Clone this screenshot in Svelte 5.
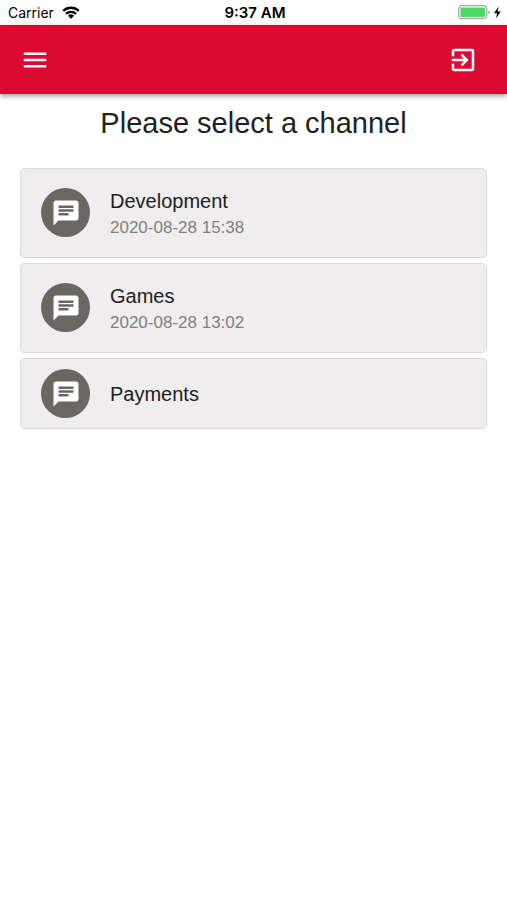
<script lang="ts">
  type Channel = { name: string; lastMessage?: string };

  const channels: Channel[] = [
    { name: "Development", lastMessage: "2020-08-28 15:38" },
    { name: "Games", lastMessage: "2020-08-28 13:02" },
    { name: "Payments" },
  ];
</script>

<div class="status-bar">
  <div class="carrier">
    <span>Carrier</span>
    <svg width="18" height="13" viewBox="0 0 18 13" aria-hidden="true">
      <g fill="none" stroke="#000" stroke-width="2.3">
        <path d="M1.2 4.9a11.2 11.2 0 0 1 15.6 0" />
        <path d="M4 7.8a7.2 7.2 0 0 1 10 0" />
      </g>
      <path d="M6 9.7a4.3 4.3 0 0 1 6 0l-3 3z" />
    </svg>
  </div>
  <div class="time">9:37 AM</div>
  <div class="battery">
    <svg width="44" height="15" viewBox="0 0 44 15" aria-hidden="true">
      <rect x="0.7" y="0.7" width="28" height="13" rx="3.4" fill="#fff" stroke="#a9a9a9" stroke-width="1.3" />
      <rect x="2.5" y="2.5" width="24.4" height="9.4" rx="1.2" fill="#4cd964" />
      <path d="M30.2 5.2q1.6.8 1.6 2t-1.6 2z" fill="#a9a9a9" />
      <path d="M40.7 1.5 36 8.3h3.1l-1.2 5.2 4.9-7h-3.2z" />
    </svg>
  </div>
</div>

<header>
  <button class="icon-button" aria-label="Menu">
    <svg viewBox="0 0 24 24"><path d="M3 18h18v-2H3v2zm0-5h18v-2H3v2zm0-7v2h18V6H3z" /></svg>
  </button>
  <button class="icon-button" aria-label="Log out">
    <svg viewBox="0 0 24 24">
      <path
        d="M10.09 15.59L11.5 17l5-5-5-5-1.41 1.41L12.67 11H3v2h9.67l-2.58 2.59zM19 3H5c-1.11 0-2 .9-2 2v4h2V5h14v14H5v-4H3v4c0 1.1.89 2 2 2h14c1.1 0 2-.9 2-2V5c0-1.1-.9-2-2-2z"
      />
    </svg>
  </button>
</header>

<main>
  <h1>Please select a channel</h1>
  <div class="channels">
    {#each channels as channel}
      <button class="channel">
        <span class="avatar">
          <svg viewBox="0 0 24 24">
            <path
              d="M20 2H4c-1.1 0-1.99.9-1.99 2L2 22l4-4h14c1.1 0 2-.9 2-2V4c0-1.1-.9-2-2-2zM6 9h12v2H6V9zm8 5H6v-2h8v2zm4-6H6V6h12v2z"
            />
          </svg>
        </span>
        <span class="text">
          <span class="name">{channel.name}</span>
          {#if channel.lastMessage}
            <span class="date">{channel.lastMessage}</span>
          {/if}
        </span>
      </button>
    {/each}
  </div>
</main>

<style>
  :global(body) {
    background: #fff;
    color: #212121;
    font-family: "Liberation Sans", Arial, sans-serif;
  }
  button {
    margin: 0;
    font: inherit;
    color: inherit;
    cursor: pointer;
  }
  .status-bar {
    display: grid;
    grid-template-columns: 1fr auto 1fr;
    align-items: center;
    height: 25px;
    padding: 0 5px 0 8px;
    color: #000;
    font-family: Inter, sans-serif;
    font-size: 14px;
    line-height: 25px;
  }
  .carrier {
    display: flex;
    align-items: center;
    gap: 8px;
  }
  .time {
    font-size: 15px;
    font-weight: 600;
  }
  .battery {
    display: flex;
    justify-content: flex-end;
  }
  header {
    display: flex;
    align-items: center;
    justify-content: space-between;
    box-sizing: border-box;
    height: 69px;
    padding: 0 29px 0 20px;
    background: #dc0a32;
    box-shadow: 0 2px 5px rgba(0, 0, 0, 0.4);
  }
  .icon-button {
    width: 30px;
    height: 30px;
    padding: 0;
    border: 0;
    background: none;
  }
  .icon-button svg {
    display: block;
    fill: #fff;
  }
  main {
    padding: 12px 20px;
  }
  h1 {
    margin: 0 0 28px;
    font-size: 29px;
    font-weight: 400;
    line-height: 34px;
    text-align: center;
  }
  .channels {
    display: flex;
    flex-direction: column;
    gap: 5px;
  }
  .channel {
    display: flex;
    align-items: flex-start;
    gap: 20px;
    padding: 10px 20px;
    border: 1px solid #d9d9d9;
    border-radius: 5px;
    background: #efedee;
    text-align: left;
  }
  .channel:has(.date) {
    padding: 19px 20px 15px;
  }
  .avatar {
    display: flex;
    align-items: center;
    justify-content: center;
    flex: none;
    width: 49px;
    height: 49px;
    border-radius: 50%;
    background: #696760;
  }
  .avatar svg {
    width: 30px;
    height: 30px;
    fill: #fff;
  }
  .text {
    display: flex;
    flex-direction: column;
    align-self: center;
  }
  .name {
    font-size: 20px;
    line-height: 26px;
  }
  .date {
    color: #808080;
    font-size: 17px;
    line-height: 28px;
  }
</style>
